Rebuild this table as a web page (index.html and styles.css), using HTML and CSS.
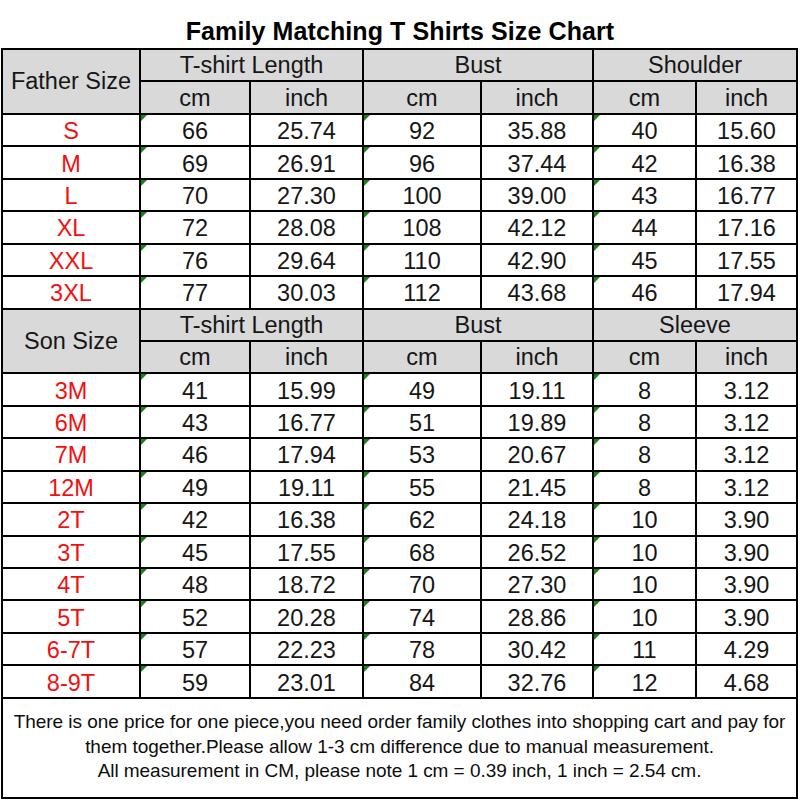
FILE: index.html
```html
<!DOCTYPE html>
<html>
<head>
<meta charset="utf-8">
<link rel="stylesheet" href="styles.css">
</head>
<body>
<h1 class="title">Family Matching T Shirts Size Chart</h1>
<table class="chart">
  <colgroup>
    <col class="c-size"><col class="c-a"><col class="c-b"><col class="c-c"><col class="c-d"><col class="c-e"><col class="c-f">
  </colgroup>
  <tbody>
    <tr class="hrow">
      <th rowspan="2" class="label">Father Size</th>
      <th colspan="2">T-shirt Length</th>
      <th colspan="2">Bust</th>
      <th colspan="2">Shoulder</th>
    </tr>
    <tr class="hrow">
      <th>cm</th><th>inch</th><th>cm</th><th>inch</th><th>cm</th><th>inch</th>
    </tr>
    <tr><td class="sz">S</td><td class="mk">66</td><td>25.74</td><td class="mk">92</td><td>35.88</td><td class="mk">40</td><td>15.60</td></tr>
    <tr><td class="sz">M</td><td class="mk">69</td><td>26.91</td><td class="mk">96</td><td>37.44</td><td class="mk">42</td><td>16.38</td></tr>
    <tr><td class="sz">L</td><td class="mk">70</td><td>27.30</td><td class="mk">100</td><td>39.00</td><td class="mk">43</td><td>16.77</td></tr>
    <tr><td class="sz">XL</td><td class="mk">72</td><td>28.08</td><td class="mk">108</td><td>42.12</td><td class="mk">44</td><td>17.16</td></tr>
    <tr><td class="sz">XXL</td><td class="mk">76</td><td>29.64</td><td class="mk">110</td><td>42.90</td><td class="mk">45</td><td>17.55</td></tr>
    <tr><td class="sz">3XL</td><td class="mk">77</td><td>30.03</td><td class="mk">112</td><td>43.68</td><td class="mk">46</td><td>17.94</td></tr>
    <tr class="hrow">
      <th rowspan="2" class="label">Son Size</th>
      <th colspan="2">T-shirt Length</th>
      <th colspan="2">Bust</th>
      <th colspan="2">Sleeve</th>
    </tr>
    <tr class="hrow">
      <th>cm</th><th>inch</th><th>cm</th><th>inch</th><th>cm</th><th>inch</th>
    </tr>
    <tr><td class="sz">3M</td><td class="mk">41</td><td>15.99</td><td class="mk">49</td><td>19.11</td><td class="mk">8</td><td>3.12</td></tr>
    <tr><td class="sz">6M</td><td class="mk">43</td><td>16.77</td><td class="mk">51</td><td>19.89</td><td class="mk">8</td><td>3.12</td></tr>
    <tr><td class="sz">7M</td><td class="mk">46</td><td>17.94</td><td class="mk">53</td><td>20.67</td><td class="mk">8</td><td>3.12</td></tr>
    <tr><td class="sz">12M</td><td class="mk">49</td><td>19.11</td><td class="mk">55</td><td>21.45</td><td class="mk">8</td><td>3.12</td></tr>
    <tr><td class="sz">2T</td><td class="mk">42</td><td>16.38</td><td class="mk">62</td><td>24.18</td><td class="mk">10</td><td>3.90</td></tr>
    <tr><td class="sz">3T</td><td class="mk">45</td><td>17.55</td><td class="mk">68</td><td>26.52</td><td class="mk">10</td><td>3.90</td></tr>
    <tr><td class="sz">4T</td><td class="mk">48</td><td>18.72</td><td class="mk">70</td><td>27.30</td><td class="mk">10</td><td>3.90</td></tr>
    <tr><td class="sz">5T</td><td class="mk">52</td><td>20.28</td><td class="mk">74</td><td>28.86</td><td class="mk">10</td><td>3.90</td></tr>
    <tr><td class="sz">6-7T</td><td class="mk">57</td><td>22.23</td><td class="mk">78</td><td>30.42</td><td class="mk">11</td><td>4.29</td></tr>
    <tr><td class="sz">8-9T</td><td class="mk">59</td><td>23.01</td><td class="mk">84</td><td>32.76</td><td class="mk">12</td><td>4.68</td></tr>
    <tr class="frow">
      <td colspan="7" class="note">There is one price for one piece,you need order family clothes into shopping cart and pay for<br>them together.Please allow 1-3 cm difference due to manual measurement.<br>All measurement in CM, please note 1 cm = 0.39 inch, 1 inch = 2.54 cm.</td>
    </tr>
  </tbody>
</table>
</body>
</html>
```

FILE: styles.css
```css
html, body {
  margin: 0;
  padding: 0;
  background: #ffffff;
}

body {
  font-family: "Liberation Sans", Arial, sans-serif;
  color: #111111;
  width: 800px;
  height: 800px;
  overflow: hidden;
}

.title {
  margin: 0;
  padding: 16px 0 2px;
  height: 30px;
  line-height: 30px;
  font-size: 25px;
  font-weight: bold;
  text-align: center;
  color: #000000;
  letter-spacing: 0.1px;
}

.chart {
  margin-left: 1px;
  width: 795px;
  table-layout: fixed;
  border-collapse: collapse;
  border: 2px solid #000;
}

.c-size { width: 138px; }
.c-a { width: 110px; }
.c-b { width: 113px; }
.c-c { width: 118px; }
.c-d { width: 112px; }
.c-e { width: 103px; }
.c-f { width: 101px; }

.chart th,
.chart td {
  border: 2px solid #000;
  padding: 0;
  text-align: center;
  vertical-align: middle;
  font-size: 23.5px;
  font-weight: normal;
  line-height: 26px;
  color: #161616;
  white-space: nowrap;
}

.chart tr {
  height: 32.45px;
}

.chart th {
  background: #d9d9d9;
}

.chart td {
  position: relative;
  padding-top: 2px;
}

.chart td.sz {
  color: #f21010;
}

.chart td.mk::before {
  content: "";
  position: absolute;
  left: 0;
  top: 0;
  width: 0;
  height: 0;
  border-top: 6px solid #128a12;
  border-right: 6px solid transparent;
}

.chart .frow {
  height: 100px;
}

.chart td.note {
  font-size: 19px;
  line-height: 24.5px;
  color: #0d0d0d;
  padding: 0 0 2px;
  letter-spacing: -0.05px;
}
```
